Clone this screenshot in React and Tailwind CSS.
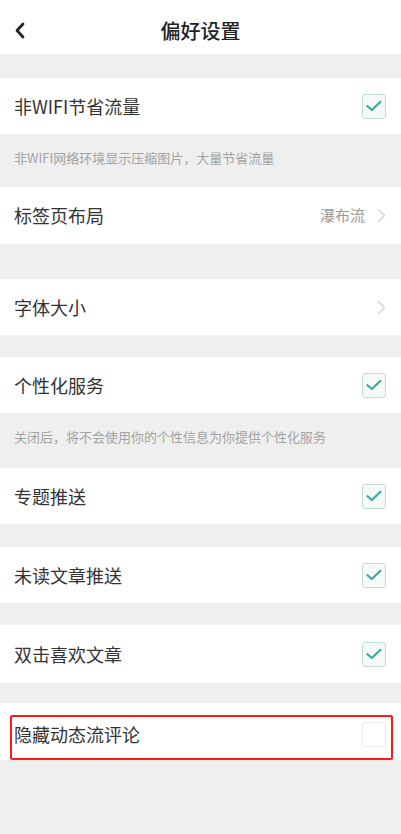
import React from "react";

const font = { fontFamily: '"Noto Sans CJK SC", "Noto Sans", sans-serif' };

function Check({ on }) {
  return (
    <div
      className={
        "w-[24px] h-[25px] rounded-[3px] border flex items-center justify-center " +
        (on ? "border-[#bfded9] bg-[#f5faf9]" : "border-[#ececec] bg-white")
      }
    >
      {on && (
        <svg width="16" height="12" viewBox="0 0 16 12" fill="none">
          <path d="M1.5 6.2 L5.8 10 L14.5 1.8" stroke="#3fa99c" strokeWidth="2.2" strokeLinecap="round" strokeLinejoin="round" />
        </svg>
      )}
    </div>
  );
}

function Chevron() {
  return (
    <svg width="9" height="15" viewBox="0 0 9 15" fill="none">
      <path d="M1.5 1.5 L7.5 7.5 L1.5 13.5" stroke="#cfcfcf" strokeWidth="1.3" strokeLinecap="round" strokeLinejoin="round" />
    </svg>
  );
}

function Row({ title, right, h = "h-[56px]", tpad = "" }) {
  return (
    <div className={"bg-white flex items-center justify-between pl-[14px] pr-[15px] " + h}>
      <span className={"text-[18px] text-[#333] " + tpad}>{title}</span>
      {right}
    </div>
  );
}

function Desc({ text, h }) {
  return (
    <div className={"bg-[#efefef] pl-[14px] pt-[10px] " + h}>
      <span className="text-[13px] text-[#a3a3a3] leading-[20px]">{text}</span>
    </div>
  );
}

export default function App() {
  return (
    <div className="w-[401px] h-[834px] bg-[#efefef] flex flex-col" style={font}>
      <div className="h-[54px] bg-white flex items-center relative shrink-0">
        <div className="absolute left-[14px] top-[22px]">
          <svg width="12" height="17" viewBox="0 0 12 17" fill="none">
            <path d="M9 2 L3 8.5 L9 15" stroke="#222" strokeWidth="2.8" strokeLinecap="round" strokeLinejoin="round" />
          </svg>
        </div>
        <div className="flex-1 text-center text-[20px] font-medium text-[#222] pt-[7px]">偏好设置</div>
      </div>
      <div className="h-[24px] shrink-0" />
      <Row title="非WIFI节省流量" right={<Check on />} />
      <Desc text="非WIFI网络环境显示压缩图片，大量节省流量" h="h-[53px]" />
      <Row
        title="标签页布局"
        h="h-[57px]"
        right={
          <div className="flex items-center gap-[12px]">
            <span className="text-[15px] text-[#999]">瀑布流</span>
            <Chevron />
          </div>
        }
      />
      <div className="h-[35px] shrink-0" />
      <Row title="字体大小" right={<Chevron />} />
      <div className="h-[22px] shrink-0" />
      <Row title="个性化服务" right={<Check on />} />
      <Desc text="关闭后，将不会使用你的个性信息为你提供个性化服务" h="h-[55px]" />
      <Row title="专题推送" right={<Check on />} />
      <div className="h-[23px] shrink-0" />
      <Row title="未读文章推送" right={<Check on />} />
      <div className="h-[22px] shrink-0" />
      <Row title="双击喜欢文章" h="h-[58px]" right={<Check on />} />
      <div className="h-[20px] shrink-0" />
      <div className="relative">
        <Row title="隐藏动态流评论" h="h-[57px]" tpad="pt-[6px]" right={<div className="pt-[6px]"><Check on={false} /></div>} />
        <div className="absolute left-[10px] right-[8px] top-[12px] bottom-0 border-2 border-[#ff1a1a] rounded-[2px]" />
      </div>
    </div>
  );
}
